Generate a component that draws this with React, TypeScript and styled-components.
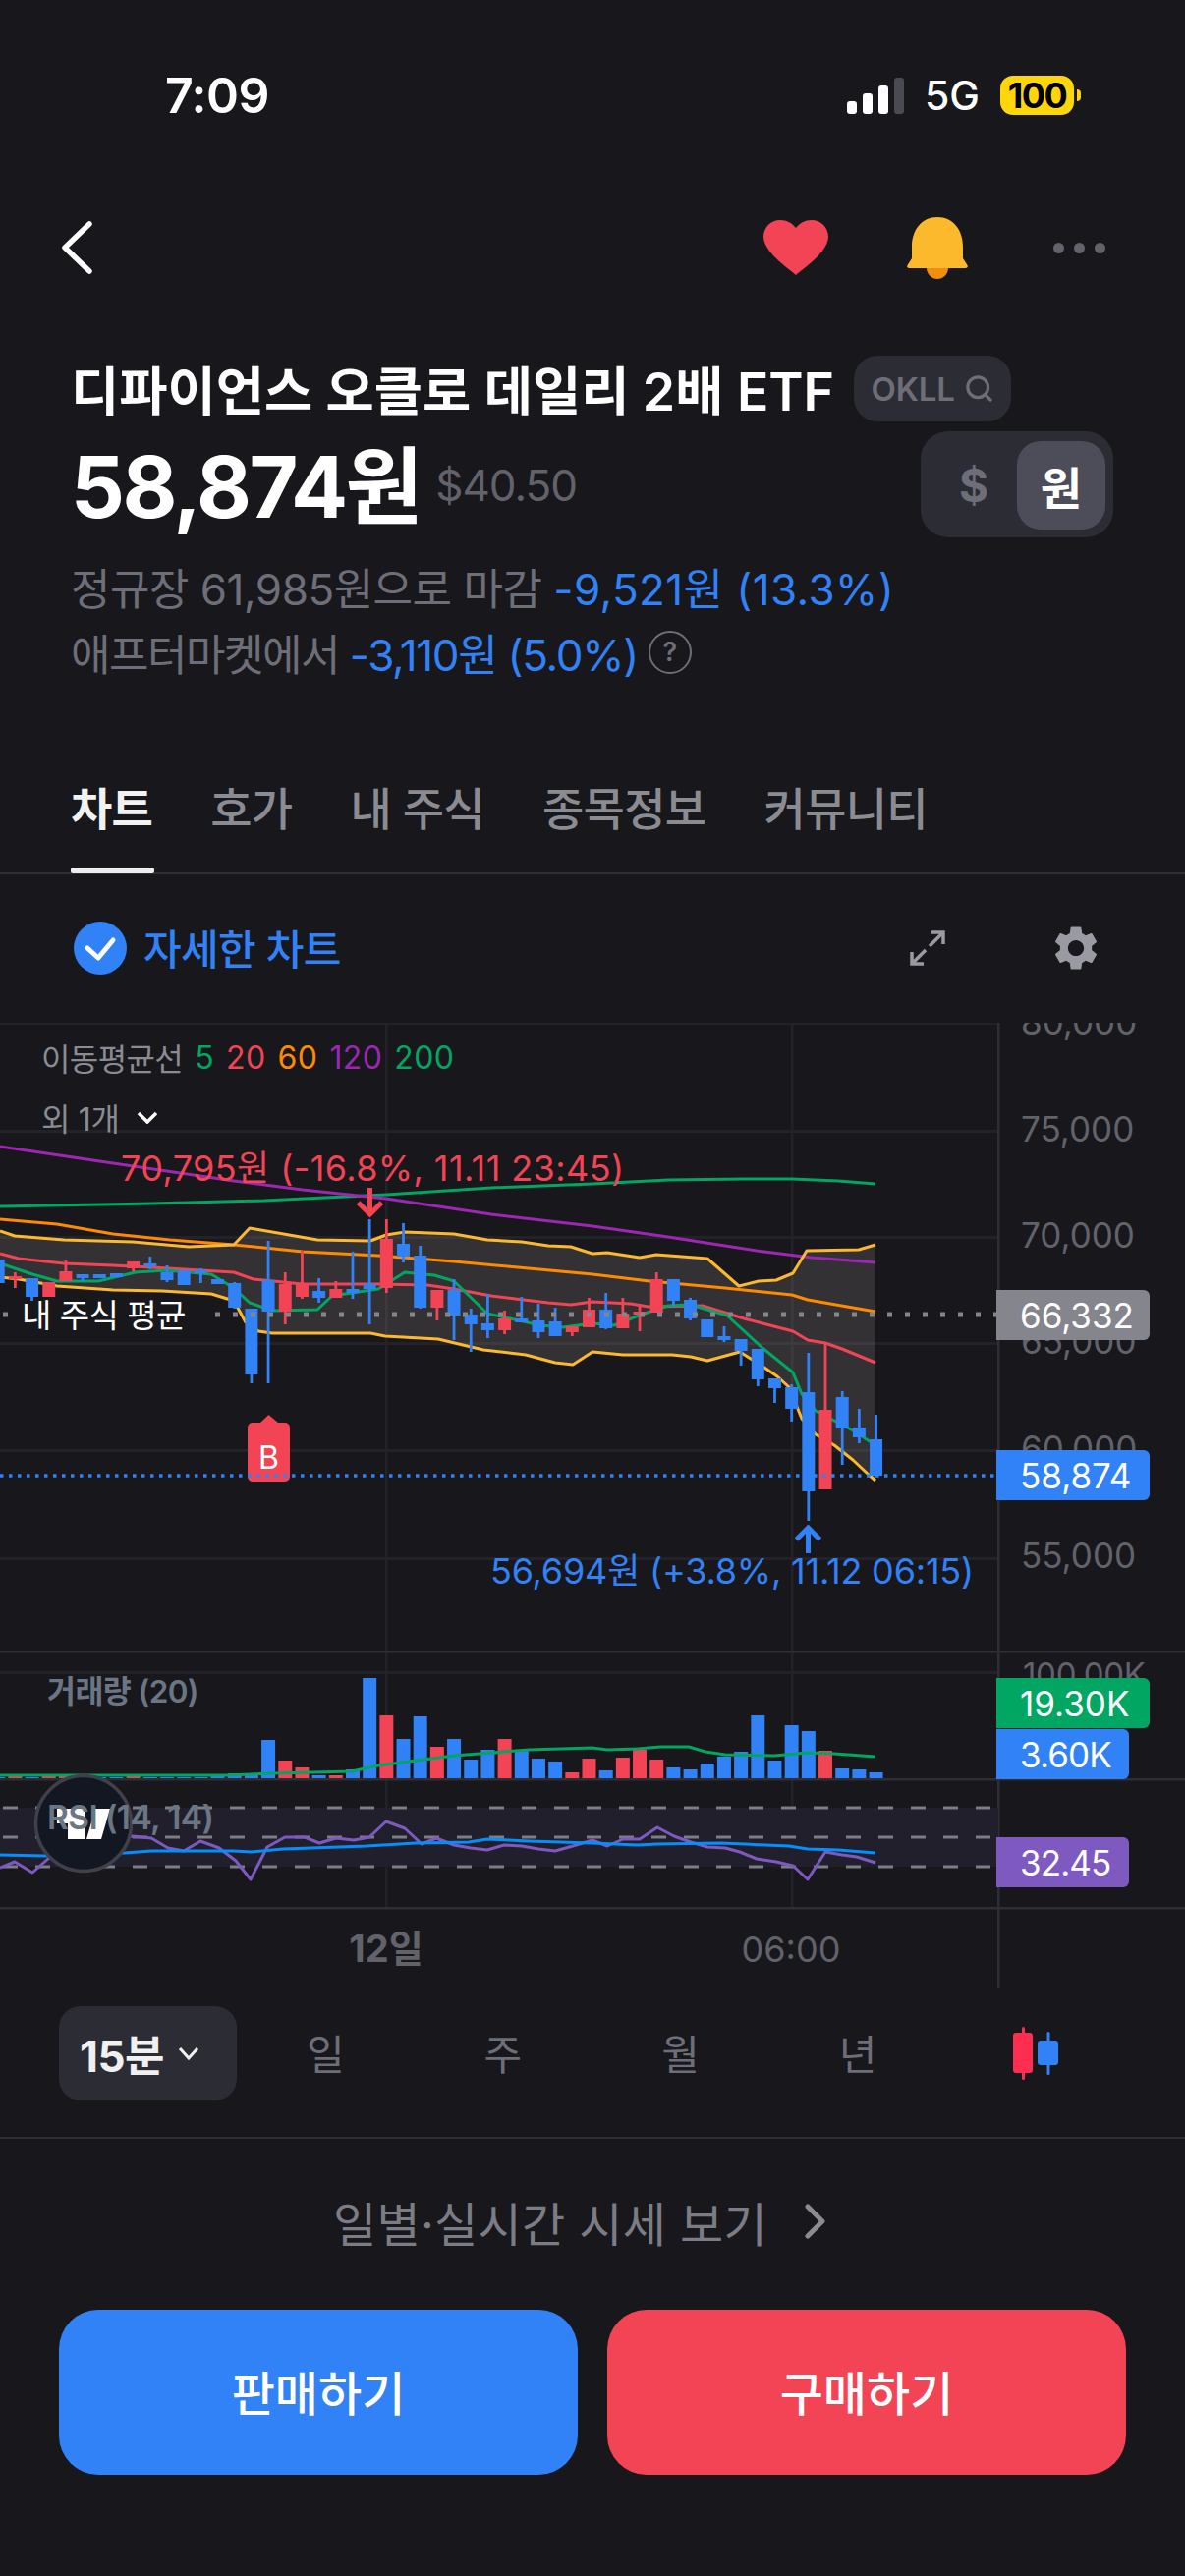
import React from "react"
import styled, { createGlobalStyle } from "styled-components"
import { MdSettings } from "react-icons/md"
import { Search } from "lucide-react"

const BLUE = "#3182f6"
const RED = "#f24455"
const FONT = `Inter, "Noto Sans CJK KR", sans-serif`

const GlobalStyle = createGlobalStyle`
  html, body { margin: 0; padding: 0; background: #17171c; }
  * { box-sizing: border-box; }
`

const Page = styled.div`
  width: 1206px;
  height: 2622px;
  background: #17171c;
  font-family: ${FONT};
  color: #fff;
  overflow: hidden;
  display: flex;
  flex-direction: column;
`

/* status bar */
const StatusBar = styled.div`
  height: 194px;
  padding: 0 113px 0 168px;
  display: flex;
  align-items: center;
  justify-content: space-between;
`
const Time = styled.div`
  font-size: 50px;
  font-weight: 600;
  letter-spacing: -0.5px;
`
const StatusRight = styled.div`
  display: flex;
  align-items: center;
`
const Signal = styled.div`
  display: flex;
  align-items: flex-end;
  gap: 6px;
  margin-right: 21px;
`
const SignalBar = styled.span<{ $h: number; $off?: boolean }>`
  width: 10px;
  height: ${(p) => p.$h}px;
  border-radius: 3px;
  background: ${(p) => (p.$off ? "#4a4a52" : "#fff")};
`
const Network = styled.div`
  font-size: 41px;
  font-weight: 500;
  margin-right: 21px;
`
const Battery = styled.div`
  width: 75px;
  height: 40px;
  border-radius: 13px;
  background: #ffd60a;
  color: #000;
  font-size: 36px;
  font-weight: 700;
  letter-spacing: -1.5px;
  display: flex;
  align-items: center;
  justify-content: center;
  position: relative;
  &::after {
    content: "";
    position: absolute;
    left: 78px;
    top: 14px;
    width: 4px;
    height: 12px;
    border-radius: 0 6px 6px 0;
    background: #ffd60a;
  }
`

/* nav */
const NavBar = styled.div`
  height: 116px;
  padding: 0 81px 0 61px;
  display: flex;
  align-items: center;
`
const NavActions = styled.div`
  margin-left: auto;
  display: flex;
  align-items: center;
  gap: 80px;
`
const Dots = styled.div`
  display: flex;
  gap: 10px;
  margin-left: 7px;
`
const Dot = styled.span`
  width: 11px;
  height: 11px;
  border-radius: 50%;
  background: #62626b;
`

/* hero */
const Hero = styled.div`
  padding: 0 73px 0 72px;
  margin-top: 52px;
`
const TitleRow = styled.div`
  height: 67px;
  display: flex;
  align-items: center;
  gap: 20px;
`
const Title = styled.h1`
  margin: -3px 0 0;
  font-size: 53.5px;
  font-weight: 600;
  white-space: nowrap;
`
const TickerBadge = styled.div`
  width: 160px;
  height: 67px;
  border-radius: 24px;
  background: #2c2c35;
  color: #6e6e78;
  font-size: 33px;
  font-weight: 600;
  display: flex;
  align-items: center;
  justify-content: center;
  gap: 9px;
  letter-spacing: -0.2px;
`
const PriceRow = styled.div`
  margin-top: 10px;
  height: 108px;
  display: flex;
  align-items: center;
`
const Price = styled.div`
  font-size: 86px;
  font-weight: 700;
  letter-spacing: -2.5px;
  margin-top: -8px;
`
const PriceUsd = styled.div`
  font-size: 44px;
  color: #62626b;
  margin: 2px 0 0 15px;
  letter-spacing: -1px;
`
const Toggle = styled.div`
  margin-left: auto;
  width: 196px;
  height: 108px;
  padding: 10px 8px 8px 10px;
  border-radius: 28px;
  background: #2c2c35;
  display: flex;
  align-items: center;
`
const ToggleOption = styled.div<{ $active?: boolean }>`
  flex: ${(p) => (p.$active ? "0 0 90px" : "1")};
  height: 90px;
  border-radius: 24px;
  background: ${(p) => (p.$active ? "#4d4d59" : "transparent")};
  color: ${(p) => (p.$active ? "#fff" : "#6e6e78")};
  font-size: 46px;
  font-weight: 700;
  display: flex;
  align-items: center;
  justify-content: center;
`
const SubLines = styled.div`
  margin-top: 16px;
`
const SubLine = styled.div<{ $tracking: number }>`
  height: 67px;
  display: flex;
  align-items: center;
  font-size: 44px;
  letter-spacing: ${(p) => p.$tracking}px;
  color: #6e6e78;
  white-space: pre;
`
const Change = styled.span<{ $tracking: number }>`
  color: ${BLUE};
  letter-spacing: ${(p) => p.$tracking}px;
`
const HelpMark = styled.span`
  width: 44px;
  height: 44px;
  margin-left: 11px;
  border: 2.5px solid #6e6e78;
  border-radius: 50%;
  font-size: 27px;
  font-weight: 600;
  letter-spacing: 0;
  display: flex;
  align-items: center;
  justify-content: center;
`

/* tabs */
const TabBar = styled.div`
  margin-top: 58px;
  height: 135px;
  padding: 0 72px 3px;
  border-bottom: 2px solid #2e2e35;
  display: flex;
  gap: 59px;
`
const Tab = styled.div<{ $active?: boolean }>`
  font-size: 46px;
  font-weight: ${(p) => (p.$active ? 700 : 500)};
  color: ${(p) => (p.$active ? "#f2f2f2" : "#8b8b92")};
  letter-spacing: -0.7px;
  display: flex;
  align-items: center;
  position: relative;
  ${(p) =>
    p.$active &&
    `&::after {
      content: "";
      position: absolute;
      left: 0;
      right: -2px;
      bottom: -4px;
      height: 6px;
      border-radius: 2px;
      background: #eee;
    }`}
`
const ChartHeader = styled.div`
  height: 151px;
  padding: 0 84px 2px 75px;
  display: flex;
  align-items: center;
`
const DetailLabel = styled.div`
  margin-left: 17px;
  font-size: 42px;
  font-weight: 500;
  color: ${BLUE};
  letter-spacing: -0.6px;
  margin-top: -2px;
`
const ChartActions = styled.div`
  margin-left: auto;
  display: flex;
  align-items: center;
  gap: 105px;
  color: #9a9aa2;
`

/* chart */
const ChartBox = styled.div`
  position: relative;
  height: 983px;
  overflow: hidden;
`
const ChartSvg = styled.svg`
  display: block;
  font-family: ${FONT};
`
const Legend = styled.div`
  position: absolute;
  left: 42px;
  top: 12px;
  display: flex;
  align-items: center;
  gap: 12px;
  font-size: 32px;
  color: #8b8b92;
  letter-spacing: -0.6px;
`
const LegendValue = styled.span<{ $color: string }>`
  color: ${(p) => p.$color};
  letter-spacing: 0.4px;
`
const LegendMore = styled.div`
  position: absolute;
  left: 42px;
  top: 73px;
  display: flex;
  align-items: center;
  gap: 17px;
  font-size: 32px;
  color: #8b8b92;
  letter-spacing: -0.3px;
`
const PaneLabel = styled.div<{ $top: number; $size: number }>`
  position: absolute;
  left: 48px;
  top: ${(p) => p.$top}px;
  font-size: ${(p) => p.$size}px;
  font-weight: 600;
  color: #6b7684;
  letter-spacing: -0.6px;
`
const PriceTag = styled.div<{ $top: number; $bg: string; $short?: boolean }>`
  position: absolute;
  left: 1014px;
  top: ${(p) => p.$top}px;
  width: ${(p) => (p.$short ? 135 : 156)}px;
  height: 51px;
  padding-left: 24px;
  border-radius: 0 6px 6px 0;
  background: ${(p) => p.$bg};
  font-size: 35px;
  letter-spacing: ${(p) => (p.$short ? -0.9 : 0)}px;
  color: #fff;
  display: flex;
  align-items: center;
`

/* interval row */
const IntervalRow = styled.div`
  height: 153px;
  padding: 18px 0 0 60px;
  border-bottom: 2px solid #2e2e35;
  display: flex;
  align-items: flex-start;
`
const IntervalPill = styled.div`
  width: 181px;
  height: 96px;
  padding-left: 21px;
  border-radius: 22px;
  background: #2c2c35;
  font-size: 44px;
  font-weight: 700;
  letter-spacing: -0.5px;
  color: #f0f0f0;
  display: flex;
  align-items: center;
  gap: 14px;
`
const IntervalItem = styled.div`
  width: 180.6px;
  height: 92px;
  font-size: 42px;
  color: #6e6e78;
  display: flex;
  align-items: center;
  justify-content: center;
`
const IconCell = styled(IntervalItem)`
  height: 96px;
`
const DailyLink = styled.div`
  height: 174px;
  padding: 0 26px 7px 0;
  font-size: 48px;
  color: #7c7c84;
  letter-spacing: 0.3px;
  display: flex;
  align-items: center;
  justify-content: center;
  gap: 38px;
`
const Buttons = styled.div`
  padding: 0 60px;
  display: grid;
  grid-template-columns: 528px 528px;
  gap: 30px;
`
const TradeButton = styled.div<{ $bg: string }>`
  height: 168px;
  padding-bottom: 5px;
  border-radius: 40px;
  background: ${(p) => p.$bg};
  font-size: 48px;
  font-weight: 500;
  display: flex;
  align-items: center;
  justify-content: center;
`

type Pt = [number, number]
// hi, body top, body bottom, lo, colour
type Candle = [number, number, number, number, "r" | "b"]

const candles: Candle[] = [
  [1283, 1283, 1307, 1307, "b"], [1296, 1300, 1302, 1312, "r"], [1302, 1302, 1321, 1325, "b"], [1306, 1306, 1321, 1321, "r"],
  [1284, 1295, 1305, 1305, "r"], [1298, 1298, 1302, 1305, "b"], [1298, 1298, 1302, 1302, "b"], [1297, 1297, 1301, 1301, "b"],
  [1285, 1285, 1292, 1295, "r"], [1280, 1287, 1290, 1293, "b"], [1289, 1296, 1304, 1306, "b"], [1294, 1294, 1309, 1309, "b"],
  [1292, 1294, 1297, 1307, "b"], [1303, 1303, 1308, 1308, "b"], [1306, 1307, 1332, 1333, "b"], [1333, 1333, 1400, 1409, "b"],
  [1264, 1304, 1336, 1409, "b"], [1296, 1308, 1336, 1349, "r"], [1274, 1307, 1321, 1323, "r"], [1302, 1315, 1322, 1327, "b"],
  [1305, 1313, 1322, 1322, "r"], [1275, 1313, 1317, 1323, "b"], [1242, 1308, 1313, 1349, "b"], [1242, 1262, 1312, 1317, "r"],
  [1246, 1267, 1280, 1286, "b"], [1269, 1279, 1332, 1333, "b"], [1314, 1314, 1332, 1345, "r"], [1303, 1314, 1340, 1365, "b"],
  [1333, 1339, 1349, 1377, "b"], [1318, 1348, 1355, 1363, "b"], [1335, 1343, 1355, 1359, "r"], [1321, 1343, 1347, 1347, "b"],
  [1328, 1345, 1357, 1363, "b"], [1332, 1346, 1361, 1361, "b"], [1351, 1351, 1357, 1361, "r"], [1322, 1334, 1352, 1352, "r"],
  [1317, 1334, 1353, 1354, "b"], [1322, 1338, 1353, 1353, "r"], [1328, 1336, 1338, 1356, "r"], [1296, 1303, 1337, 1337, "r"],
  [1303, 1303, 1325, 1330, "b"], [1322, 1324, 1343, 1345, "b"], [1344, 1344, 1362, 1362, "b"], [1351, 1361, 1365, 1367, "b"],
  [1364, 1364, 1376, 1391, "b"], [1374, 1374, 1405, 1412, "b"], [1404, 1404, 1414, 1429, "b"], [1410, 1413, 1435, 1448, "b"],
  [1378, 1418, 1519, 1549, "b"], [1367, 1436, 1517, 1517, "r"], [1417, 1423, 1455, 1492, "b"], [1435, 1454, 1464, 1470, "b"],
  [1441, 1466, 1503, 1503, "b"],
]

const volumes: [number, "r" | "b"][] = [
  [1810, "b"], [1809, "r"], [1810, "b"], [1809, "r"], [1809, "r"], [1810, "b"], [1810, "b"], [1810, "b"],
  [1809, "r"], [1810, "b"], [1810, "b"], [1810, "b"], [1810, "b"], [1809, "b"], [1806, "b"], [1806, "b"],
  [1772, "b"], [1793, "r"], [1800, "r"], [1808, "b"], [1808, "r"], [1802, "b"], [1709, "b"], [1747, "r"],
  [1771, "b"], [1748, "b"], [1779, "r"], [1771, "b"], [1792, "b"], [1782, "b"], [1771, "r"], [1783, "b"],
  [1791, "b"], [1794, "b"], [1805, "r"], [1791, "r"], [1803, "b"], [1790, "r"], [1782, "r"], [1792, "r"],
  [1800, "b"], [1802, "b"], [1796, "b"], [1789, "b"], [1784, "b"], [1747, "b"], [1793, "b"], [1757, "b"],
  [1763, "b"], [1783, "r"], [1801, "b"], [1802, "b"], [1805, "b"],
]

const bbUpper: Pt[] = [[0,1254],[15,1259],[65,1263],[135,1265],[192,1270],[238,1268],[254,1251],[323,1263],[377,1264],[393,1258],[412,1255],[462,1257],[496,1263],[531,1265],[558,1269],[581,1270],[603,1277],[618,1276],[651,1281],[668,1278],[720,1282],[752,1310],[772,1305],[790,1304],[807,1297],[821,1274],[874,1273],[891,1268]]
const bbLower: Pt[] = [[0,1301],[19,1303],[58,1310],[115,1314],[165,1315],[215,1318],[238,1325],[250,1347],[263,1356],[277,1358],[377,1358],[392,1361],[446,1364],[492,1375],[535,1380],[565,1388],[583,1390],[603,1377],[634,1380],[684,1380],[703,1382],[720,1386],[753,1377],[778,1393],[791,1402],[803,1413],[816,1445],[830,1461],[849,1472],[868,1487],[884,1502],[891,1508]]
const ma120: Pt[] = [[0,1168],[115,1185],[238,1203],[308,1212],[393,1221],[500,1237],[603,1249],[680,1260],[770,1274],[826,1281],[891,1286]]
const ma200: Pt[] = [[0,1229],[154,1226],[269,1223],[393,1217],[500,1210],[603,1206],[680,1202],[757,1201],[806,1201],[853,1203],[891,1206]]
const ma60: Pt[] = [[0,1242],[58,1247],[115,1257],[173,1263],[238,1268],[308,1275],[385,1279],[462,1285],[538,1292],[603,1298],[661,1305],[738,1312],[806,1319],[822,1324],[891,1336]]
const ma20: Pt[] = [[0,1277],[19,1282],[65,1287],[115,1289],[154,1291],[238,1296],[258,1303],[308,1308],[385,1308],[435,1309],[462,1313],[500,1320],[558,1327],[581,1329],[603,1326],[642,1328],[660,1331],[715,1330],[757,1343],[776,1348],[807,1356],[822,1365],[840,1368],[857,1374],[891,1388]]
const ma5: Pt[] = [[0,1287],[15,1292],[33,1298],[58,1305],[100,1305],[138,1296],[169,1294],[215,1298],[238,1312],[254,1327],[277,1335],[323,1334],[338,1320],[385,1313],[412,1296],[442,1299],[462,1305],[496,1338],[519,1343],[550,1350],[573,1352],[603,1348],[625,1350],[650,1340],[680,1330],[703,1329],[740,1340],[776,1373],[807,1398],[816,1420],[830,1437],[868,1457],[891,1472]]
const volMa: Pt[] = [[0,1808],[231,1808],[277,1806],[358,1804],[385,1798],[423,1793],[462,1788],[538,1782],[603,1780],[618,1782],[649,1781],[672,1779],[701,1779],[718,1784],[738,1787],[788,1788],[822,1785],[849,1786],[891,1789]]
const rsi: Pt[] = [[0,1902],[15,1896],[33,1907],[50,1892],[135,1870],[154,1872],[171,1882],[187,1885],[204,1875],[223,1882],[240,1895],[255,1914],[272,1881],[290,1871],[310,1871],[325,1877],[342,1872],[360,1874],[376,1871],[393,1855],[412,1862],[429,1878],[444,1872],[462,1879],[479,1882],[496,1884],[513,1879],[531,1880],[548,1883],[565,1885],[583,1880],[603,1874],[618,1880],[634,1873],[651,1873],[669,1861],[686,1870],[703,1876],[720,1881],[738,1882],[753,1886],[770,1893],[790,1896],[807,1900],[822,1914],[840,1886],[857,1889],[872,1891],[891,1897]]
const rsiSignal: Pt[] = [[0,1889],[46,1890],[127,1887],[154,1885],[238,1885],[256,1886],[288,1883],[373,1880],[423,1877],[477,1876],[496,1873],[538,1875],[603,1877],[649,1879],[668,1878],[734,1877],[803,1880],[822,1883],[853,1884],[891,1887]]

const toPoints = (a: Pt[]) => a.map((p) => p.join(",")).join(" ")
const candleX = (i: number) => -1.8 + 17.18 * i
const colorOf = (c: "r" | "b") => (c === "r" ? RED : BLUE)

const axisLabels: [string, number][] = [
  ["80,000", 1042], ["75,000", 1151], ["70,000", 1259], ["65,000", 1367], ["60,000", 1476], ["55,000", 1585],
]
const gridRows = [1042, 1152, 1260, 1368, 1477, 1587, 1703]
const chartTop = 1042

const Line = ({ points, color }: { points: Pt[]; color: string }) => (
  <polyline points={toPoints(points)} fill="none" stroke={color} strokeWidth={3} strokeLinejoin="round" />
)

const Chart = () => (
  <ChartSvg width={1206} height={983} viewBox="0 1042 1206 983">
    {gridRows.map((y) => (
      <rect key={y} x={0} y={y - 1} width={1016} height={3} fill="#222228" />
    ))}
    <rect x={392} y={1042} width={2.5} height={901} fill="#222228" />
    <rect x={805} y={1042} width={2.5} height={901} fill="#222228" />
    <polygon points={toPoints([...bbUpper, ...[...bbLower].reverse()])} fill="rgba(255,240,220,0.12)" />

    <Line points={ma200} color="#00a661" />
    <Line points={ma120} color="#9c27b0" />
    <Line points={ma60} color="#ff8a00" />
    <Line points={bbUpper} color="#fdb92e" />
    <Line points={bbLower} color="#fdb92e" />
    <Line points={ma20} color={RED} />
    <Line points={ma5} color="#00a661" />

    {candles.map(([hi, top, bot, lo, c], i) => (
      <g key={i} fill={colorOf(c)}>
        <rect x={candleX(i) - 1.4} y={hi} width={2.8} height={lo - hi} />
        <rect x={candleX(i) - 6.5} y={top} width={13} height={Math.max(bot - top, 3)} />
      </g>
    ))}

    <rect x={0} y={1681} width={1206} height={2.5} fill="#2e2e35" />
    <rect x={0} y={1811} width={1206} height={2.5} fill="#2e2e35" />
    <rect x={0} y={1942} width={1206} height={2.5} fill="#2e2e35" />
    <rect x={1015} y={1042} width={2.5} height={983} fill="#2e2e35" />

    <line x1={3} x2={8} y1={1339} y2={1339} stroke="#85858d" strokeWidth={5} />
    <line x1={219} x2={1014} y1={1339} y2={1339} stroke="#85858d" strokeWidth={5} strokeDasharray="5 13" />
    <text x={22} y={1352} fontSize={33} fill="#fff" letterSpacing={-0.5}>내 주식 평균</text>

    <path d="M252 1454a5 5 0 0 1 5-5h8l8.500-8 9.500 8h7a5 5 0 0 1 5 5v50a5 5 0 0 1-5 5h-33a5 5 0 0 1-5-5z" fill={RED} />
    <text x={273.500} y={1496} fontSize={32} fill="#fff" textAnchor="middle">B</text>
    <line x1={0} x2={1014} y1={1503} y2={1503} stroke={BLUE} strokeWidth={3.500} strokeDasharray="3.500 5.500" />

    <path d="M376.500 1210v26M364.500 1225l12 12 12-12" fill="none" stroke={RED} strokeWidth={5} />
    <text x={123} y={1203} fontSize={36} fill={RED} letterSpacing={0.4}>70,795원 (-16.8%, 11.11 23:45)</text>
    <path d="M822.500 1582v-26M810.500 1568l12-12 12 12" fill="none" stroke={BLUE} strokeWidth={5} />
    <text x={499} y={1613} fontSize={36} fill={BLUE} letterSpacing={-0.2}>56,694원 (+3.8%, 11.12 06:15)</text>

    {axisLabels.map(([label, y]) => (
      <text key={label} x={1039} y={y + 12} fontSize={35} fill="#62626b">{label}</text>
    ))}
    <text x={1041} y={1717} fontSize={33} fill="#62626b" letterSpacing={-0.3}>100.00K</text>

    {volumes.map(([top, c], i) => (
      <rect key={i} x={candleX(i) - 7} y={top} width={14} height={1811 - top} fill={colorOf(c)} />
    ))}
    <Line points={volMa} color="#00a661" />

    <rect x={0} y={1841} width={1016} height={60} fill="#211f2c" />
    {[1841, 1871, 1901].map((y) => (
      <line key={y} x1={3} x2={1014} y1={y} y2={y} stroke="#7d7d85" strokeWidth={3} strokeDasharray="15 18" />
    ))}
    <Line points={rsi} color="#7e59c0" />
    <Line points={rsiSignal} color="#0091ff" />

    <circle cx={85} cy={1857} r={48.500} fill="#131722" stroke="#3f4049" strokeWidth={3.500} />
    <path d="M58 1842h29v31H69v-16H58zM97 1842h15l-9 31H88z" fill="#fff" />

    <text x={393} y={1998} fontSize={38} fontWeight={700} fill="#62626b" textAnchor="middle">12일</text>
    <text x={805} y={1998} fontSize={36} fill="#62626b" textAnchor="middle">06:00</text>
  </ChartSvg>
)

export default function App() {
  return (
    <Page>
      <GlobalStyle />
      <StatusBar>
        <Time>7:09</Time>
        <StatusRight>
          <Signal>
            <SignalBar $h={13} />
            <SignalBar $h={21} />
            <SignalBar $h={29} />
            <SignalBar $h={37} $off />
          </Signal>
          <Network>5G</Network>
          <Battery>100</Battery>
        </StatusRight>
      </StatusBar>

      <NavBar>
        <svg width={34} height={56} viewBox="0 0 34 56">
          <path d="M30 4 5 28l25 24" fill="none" stroke="#fff" strokeWidth={5.500} strokeLinecap="round" strokeLinejoin="round" />
        </svg>
        <NavActions>
          <svg width={66} height={56} viewBox="0 0 66 56">
            <path d="M33 56C28 51 0 33 0 17 0 7 8 0 17 0c7 0 12 3 16 8 4-5 9-8 16-8 9 0 17 7 17 17 0 16-28 34-33 39z" fill={RED} />
          </svg>
          <svg width={62} height={63} viewBox="0 0 62 63">
            <path d="M20 52h22c0 6-5 11-11 11s-11-5-11-11z" fill="#ee8f12" />
            <path d="M31 0C15 0 5 13 5 30v12l-4.500 7c-1 2 .5 3 2.500 3h56c2 0 3.500-1 2.500-3L57 42V30C57 13 47 0 31 0z" fill="#fdb92c" />
          </svg>
          <Dots>
            <Dot />
            <Dot />
            <Dot />
          </Dots>
        </NavActions>
      </NavBar>

      <Hero>
        <TitleRow>
          <Title>디파이언스 오클로 데일리 2배 ETF</Title>
          <TickerBadge>
            OKLL
            <Search size={31} strokeWidth={2.5} />
          </TickerBadge>
        </TitleRow>
        <PriceRow>
          <Price>58,874원</Price>
          <PriceUsd>$40.50</PriceUsd>
          <Toggle>
            <ToggleOption>$</ToggleOption>
            <ToggleOption $active>원</ToggleOption>
          </Toggle>
        </PriceRow>
        <SubLines>
          <SubLine $tracking={-0.5}>
            정규장 61,985원으로 마감 <Change $tracking={0.4}>-9,521원 (13.3%)</Change>
          </SubLine>
          <SubLine $tracking={-1.5}>
            애프터마켓에서 <Change $tracking={-1.3}>-3,110원 (5.0%)</Change>
            <HelpMark>?</HelpMark>
          </SubLine>
        </SubLines>
      </Hero>

      <TabBar>
        <Tab $active>차트</Tab>
        <Tab>호가</Tab>
        <Tab>내 주식</Tab>
        <Tab>종목정보</Tab>
        <Tab>커뮤니티</Tab>
      </TabBar>

      <ChartHeader>
        <svg width={54} height={54} viewBox="0 0 54 54">
          <circle cx={27} cy={27} r={27} fill={BLUE} />
          <path d="M14 27l11 10 15-18" fill="none" stroke="#fff" strokeWidth={5} strokeLinecap="round" strokeLinejoin="round" />
        </svg>
        <DetailLabel>자세한 차트</DetailLabel>
        <ChartActions>
          <svg width={38} height={38} viewBox="0 0 38 38">
            <path d="M21 17 35 3M23 3h12v12M17 21 3 35M3 23v12h12" fill="none" stroke="currentColor" strokeWidth={3.500} />
          </svg>
          <MdSettings size={54} />
        </ChartActions>
      </ChartHeader>

      <ChartBox>
        <Chart />
        <Legend>
          이동평균선
          <LegendValue $color="#00a661">5</LegendValue>
          <LegendValue $color={RED}>20</LegendValue>
          <LegendValue $color="#ff8a00">60</LegendValue>
          <LegendValue $color="#9c27b0">120</LegendValue>
          <LegendValue $color="#00a661">200</LegendValue>
        </Legend>
        <LegendMore>
          외 1개
          <svg width={22} height={14} viewBox="0 0 22 14">
            <path d="M2 3l9 9 9-9" fill="none" stroke="#fff" strokeWidth={3.500} />
          </svg>
        </LegendMore>
        <PaneLabel $top={1719 - chartTop - 22} $size={31.5}>거래량 (20)</PaneLabel>
        <PaneLabel $top={1851 - chartTop - 20} $size={33.5}>RSI (14, 14)</PaneLabel>
        <PriceTag $top={1314 - chartTop} $bg="#85858d">66,332</PriceTag>
        <PriceTag $top={1477 - chartTop} $bg={BLUE}>58,874</PriceTag>
        <PriceTag $top={1709 - chartTop} $bg="#00a661">19.30K</PriceTag>
        <PriceTag $top={1761 - chartTop} $bg={BLUE} $short>3.60K</PriceTag>
        <PriceTag $top={1871 - chartTop} $bg="#7e59c0" $short>32.45</PriceTag>
      </ChartBox>

      <IntervalRow>
        <IntervalPill>
          15분
          <svg width={22} height={14} viewBox="0 0 22 14">
            <path d="M2 2l9 10 9-10" fill="none" stroke="#f0f0f0" strokeWidth={3} />
          </svg>
        </IntervalPill>
        <IntervalItem>일</IntervalItem>
        <IntervalItem>주</IntervalItem>
        <IntervalItem>월</IntervalItem>
        <IntervalItem>년</IntervalItem>
        <IconCell>
          <svg width={46} height={54} viewBox="0 0 46 54">
            <rect x={9} y={0} width={3} height={54} rx={1.500} fill="#ff2d4f" />
            <rect x={0} y={6} width={20} height={41} rx={3} fill="#ff2d4f" />
            <rect x={34.500} y={5} width={3} height={44} rx={1.500} fill={BLUE} />
            <rect x={25} y={14} width={21} height={25} rx={3} fill={BLUE} />
          </svg>
        </IconCell>
      </IntervalRow>

      <DailyLink>
        일별·실시간 시세 보기
        <svg width={22} height={36} viewBox="0 0 22 36">
          <path d="M3 3l15 15L3 33" fill="none" stroke="#8b8b92" strokeWidth={5} strokeLinecap="round" strokeLinejoin="round" />
        </svg>
      </DailyLink>

      <Buttons>
        <TradeButton $bg={BLUE}>판매하기</TradeButton>
        <TradeButton $bg={RED}>구매하기</TradeButton>
      </Buttons>
    </Page>
  )
}
